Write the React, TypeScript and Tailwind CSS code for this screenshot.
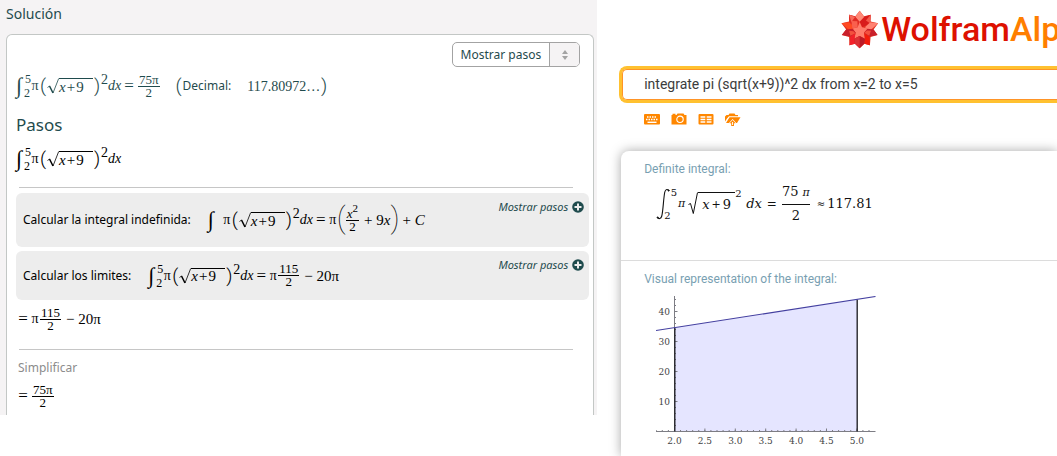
import type { ReactNode } from "react";

type Kids = { children?: ReactNode };

/* ---------- Left panel: formula pieces ---------- */

function Formula({ children }: Kids) {
  return (
    <span className="inline-flex h-8 items-center whitespace-nowrap font-['Liberation_Serif',serif] text-[15px] leading-4">
      {children}
    </span>
  );
}

function Integral({ lower, upper }: { lower?: string; upper?: string }) {
  return (
    <span className="inline-flex h-7 items-center">
      <span className="w-2 text-center text-[22px] leading-6">∫</span>
      <span className="flex h-6 w-2 flex-col justify-between pl-px text-[12px] leading-[10px]">
        <span className="text-right">{upper}</span>
        <span className="text-left">{lower}</span>
      </span>
    </span>
  );
}

function Pi() {
  return <span className="w-2 text-center text-[14px]">π</span>;
}

function Equals() {
  return <span className="w-4 text-center text-[17px]">=</span>;
}

function Paren({ children }: Kids) {
  return <span className="w-2 text-center font-[Roboto,sans-serif] text-[19px] font-light leading-5">{children}</span>;
}

function TallParen({ children }: Kids) {
  return <span className="w-2 pb-1 text-center font-[Roboto,sans-serif] text-[30px] font-thin leading-8">{children}</span>;
}

function Fraction({ top, bottom }: { top: ReactNode; bottom: ReactNode }) {
  return (
    <span className="mx-px inline-flex flex-col text-center text-[13px] leading-3">
      <span className="border-b border-current px-px">{top}</span>
      <span>{bottom}</span>
    </span>
  );
}

function RootSign() {
  return (
    <svg viewBox="0 0 12 16" className="h-4 w-3" fill="none" stroke="currentColor">
      <path d="M0.5 9.5 L2.5 8" strokeWidth="0.8" />
      <path d="M2.5 8 L6 15" strokeWidth="1.5" />
      <path d="M6 15 L11.7 0.5" strokeWidth="0.8" />
    </svg>
  );
}

function SquaredRoot() {
  return (
    <span className="inline-flex h-6 items-center">
      <Paren>(</Paren>
      <RootSign />
      <span className="flex h-4 w-[34px] items-center gap-px border-t border-current">
        <i>x</i>
        <span>+</span>
        <span>9</span>
      </span>
      <Paren>)</Paren>
      <span className="h-7 w-[7px] text-center text-[14px] leading-4">2</span>
      <i className="w-[13px] text-[14px]">dx</i>
    </span>
  );
}

function DefiniteIntegral() {
  return (
    <>
      <Integral lower="2" upper="5" />
      <Pi />
      <SquaredRoot />
    </>
  );
}

function Step({ title, children }: Kids & { title: string }) {
  return (
    <div className="flex items-stretch justify-between rounded-md bg-[#ededed] pl-[7px] pr-[5px]">
      <div className="flex items-center gap-4">
        <span className="whitespace-nowrap text-[12px] text-black">{title}</span>
        {children}
      </div>
      <a
        href="#pasos"
        className="flex items-center gap-1 self-start pt-[6px] text-[11px] italic leading-4 text-[#1f4b4d]"
      >
        Mostrar pasos
        <svg viewBox="0 0 12 12" className="size-3">
          <circle cx="6" cy="6" r="5.8" fill="#1f4b4d" />
          <path d="M6 2.5v7M2.5 6h7" stroke="#ededed" strokeWidth="2" />
        </svg>
      </a>
    </div>
  );
}

function SolutionPanel() {
  return (
    <section className="flex h-[415px] w-[56.5%] shrink-0 flex-col overflow-hidden bg-[#f5f3f4] pl-[6px] pr-[3px] font-['Noto_Sans',sans-serif] text-[#1f4b4d]">
      <h1 className="h-[34px] pt-1 text-[14px] leading-5">Solución</h1>
      <div className="flex-1 rounded-t-md border border-b-0 border-[#c3c7c5] bg-white px-2">
        <div className="flex justify-end pr-[5px] pt-[7px]">
          <button
            type="button"
            className="flex h-[25px] items-stretch overflow-hidden rounded-[5px] border border-[#a3a3a3] bg-white text-[12px]"
          >
            <span className="flex items-center border-r border-[#a3a3a3] px-2">Mostrar pasos</span>
            <span className="flex w-[29px] items-center justify-center bg-[#f5f3f4] text-[#a3a3a3]">
              <svg viewBox="0 0 6 10" className="h-[10px] w-[6px]" fill="currentColor">
                <path d="M3 0L6 4H0zM3 10L0 6h6z" />
              </svg>
            </span>
          </button>
        </div>

        <div className="flex h-8 items-center gap-[14px] pt-[6px]">
          <Formula>
            <DefiniteIntegral />
            <Equals />
            <Fraction top="75π" bottom="2" />
          </Formula>
          <span className="flex items-center text-[12px]">
            <Paren>(</Paren>
            Decimal:
            <span className="pl-4 font-['Liberation_Serif',serif] text-[14px]">117.80972…</span>
            <Paren>)</Paren>
          </span>
        </div>

        <h2 className="mt-[14px] pl-px text-[17px] leading-6">Pasos</h2>

        <div className="text-black">
          <div className="flex h-11 items-center">
            <Formula>
              <DefiniteIntegral />
            </Formula>
          </div>

          <hr className="ml-1 mr-3 mt-[6px] border-[#c6c6c6]" />

          <div className="-mr-1 ml-px mt-[5px] flex flex-col gap-1">
            <Step title="Calcular la integral indefinida:">
              <span className="flex h-[54px] items-center">
                <Formula>
                  <Integral />
                  <Pi />
                  <SquaredRoot />
                  <Equals />
                  <Pi />
                  <TallParen>(</TallParen>
                  <Fraction
                    top={
                      <>
                        <i>x</i>
                        <sup className="text-[11px]">2</sup>
                      </>
                    }
                    bottom="2"
                  />
                  <span className="pl-1">
                    + 9<i>x</i>
                  </span>
                  <TallParen>)</TallParen>
                  <span className="pl-1">
                    + <i>C</i>
                  </span>
                </Formula>
              </span>
            </Step>
            <Step title="Calcular los limites:">
              <span className="flex h-[49px] items-center">
                <Formula>
                  <DefiniteIntegral />
                  <Equals />
                  <Pi />
                  <Fraction top="115" bottom="2" />
                  <span className="pl-1">− 20π</span>
                </Formula>
              </span>
            </Step>
          </div>

          <div className="flex h-[38px] items-center">
            <Formula>
              <Equals />
              <Pi />
              <Fraction top="115" bottom="2" />
              <span className="pl-1">− 20π</span>
            </Formula>
          </div>

          <hr className="ml-1 mr-3 mt-[11px] border-[#c6c6c6]" />

          <h3 className="mt-2 pl-[3px] text-[12px] leading-5 text-[#8c8c8c]">Simplificar</h3>
          <div className="flex h-9 items-center">
            <Formula>
              <Equals />
              <Fraction top="75π" bottom="2" />
            </Formula>
          </div>
        </div>
      </div>
    </section>
  );
}

/* ---------- Right panel ---------- */

function Spikey() {
  return (
    <svg viewBox="62 28 114 118" className="h-[39px] w-[38px] shrink-0">
      <path
        d="M118 30L131 47L151 42L151 63L174 68L160 87L172 104L151 110L149 135L132 130L118 144L104 130L87 135L86 110L64 104L77 87L63 68L86 63L86 42L105 47Z"
        fill="#e2301f"
      />
      <path d="M118 30L132 49L118 64L104 49Z" fill="#ff8a78" />
      <path d="M86 42L104 48L118 64L110 80L87 68Z" fill="#e02b24" />
      <path d="M86 42L104 49L93 64Z" fill="#f76a5a" />
      <path d="M151 42L132 49L118 64L126 80L149 68Z" fill="#d91c1c" />
      <path d="M151 42L149 68L137 60Z" fill="#f45b4c" />
      <path d="M63 68L86 65L103 80L88 91Z" fill="#ff4a22" />
      <path d="M174 68L150 65L134 80L149 91Z" fill="#ff8272" />
      <path d="M96 84L112 80L118 64L125 80L143 84L131 97L134 115L118 107L102 115L106 97Z" fill="#ff7c6b" />
      <path d="M93 61L111 62L112 80L96 84Z" fill="#f9604e" />
      <path d="M77 87L97 85L106 97L91 108L64 104Z" fill="#c9202b" />
      <path d="M160 87L142 85L131 97L147 108L172 104Z" fill="#c9202b" />
      <path d="M86 91L99 92L105 98L90 106Z" fill="#f4503e" />
      <path d="M152 91L140 90L132 97L147 106Z" fill="#f4503e" />
      <path d="M91 108L105 99L102 115L104 130L87 135Z" fill="#f3212b" />
      <path d="M147 108L132 99L134 115L132 130L149 135Z" fill="#f21c0c" />
      <path d="M118 107L134 115L132 130L118 144L104 130L102 115Z" fill="#bd1a26" />
      <path d="M118 107L118 144L104 130L102 115Z" fill="#dc3035" />
    </svg>
  );
}

function InputTools() {
  return (
    <div className="flex items-center gap-[9px] text-[#ff8700]">
      <button type="button" aria-label="Keyboard">
        <svg viewBox="0 0 18 14" className="h-[14px] w-[18px]">
          <rect x="1" y="2" width="16" height="10.5" rx="1" fill="currentColor" />
          <path d="M4 5h10M3 7.5h12" stroke="white" strokeWidth="1.4" strokeDasharray="1.5 1" />
          <path d="M4.5 10.3h9" stroke="white" strokeWidth="1.4" />
        </svg>
      </button>
      <button type="button" aria-label="Camera">
        <svg viewBox="0 0 18 14" className="h-[14px] w-[18px]">
          <path d="M1.5 3h1V1.8h3V3h1l1-1.5h6L14.500 3H16.500v9.500h-15z" fill="currentColor" />
          <circle cx="10" cy="7.300" r="3.200" fill="none" stroke="white" strokeWidth="1.100" />
        </svg>
      </button>
      <button type="button" aria-label="Table">
        <svg viewBox="0 0 18 14" className="h-[14px] w-[18px]">
          <rect x="1.500" y="2" width="15" height="10.500" rx="1" fill="currentColor" />
          <path
            d="M3.500 5h4.800M9.700 5h4.800M3.500 7.500h4.800M9.700 7.500h4.800M3.500 10h4.800M9.700 10h4.800"
            stroke="white"
            strokeWidth="1.300"
          />
        </svg>
      </button>
      <button type="button" aria-label="Upload">
        <svg viewBox="0 0 18 14" className="h-[14px] w-[18px]">
          <path d="M1 9.500V4.500l1.500-1.500h2l1-1.500h5L11.500 3H14v1.300H5L3 6.500z" fill="currentColor" />
          <path d="M5.500 5.200h11L13 11h-.8L8.600 7 5 11H2z" fill="currentColor" />
          <path d="M8.600 8L11.600 11.300H10V14H7.200V11.300H5.600z" fill="currentColor" />
          <path d="M8.600 10v3" stroke="white" strokeWidth="1" />
        </svg>
      </button>
    </div>
  );
}

function AlphaFormula() {
  return (
    <div className="flex h-[42px] items-center whitespace-nowrap pl-3 font-['DejaVu_Serif',serif] text-[13px] leading-4 text-[#111]">
      <svg viewBox="0 0 14 32" className="h-8 w-[14px]" fill="none" stroke="currentColor">
        <path d="M13 3C12 .8 9.500 1 8.800 4C7.500 10 7.200 22 5.800 28C5 31 2.500 31.200 1.500 29.500" strokeWidth="1.100" />
        <circle cx="12.600" cy="2.500" r=".6" fill="currentColor" />
        <circle cx="1.700" cy="29.500" r=".6" fill="currentColor" />
      </svg>
      <span className="-ml-[6px] flex h-8 w-[13px] flex-col justify-between text-[10px] leading-[9px]">
        <span className="text-right">5</span>
        <span className="text-left">2</span>
      </span>
      <i className="w-[9px] text-center text-[11px]">π</i>
      <svg viewBox="0 0 10 24" className="ml-[2px] h-6 w-[10px]" fill="none" stroke="currentColor">
        <path d="M.5 12.500L2.500 11.500L5.300 21.500L9.500 .5" />
      </svg>
      <span className="flex h-6 w-[37px] items-center gap-[2px] border-t border-current pl-1">
        <i>x</i>
        <span className="text-[11px]">+</span>
        <span>9</span>
      </span>
      <span className="h-8 w-[11px] text-[10px] leading-3">2</span>
      <i>dx</i>
      <span className="px-[5px] text-[12px]">=</span>
      <span className="flex flex-col text-center">
        <span className="border-b border-current pb-[3px]">
          75 <i className="text-[11px]">π</i>
        </span>
        <span className="pt-[3px]">2</span>
      </span>
      <span className="pl-[7px] pr-[2px] text-[10px]">≈</span>
      <span>117.81</span>
    </div>
  );
}

const X_LABELS = ["2.0", "2.5", "3.0", "3.5", "4.0", "4.5", "5.0"];
const Y_LABELS = [10, 20, 30, 40];
const X_MINOR = Array.from({ length: 36 }, (_, i) => 0.2 + i * 6.08);
const Y_MINOR = Array.from({ length: 22 }, (_, i) => 135.5 - (i + 1) * 6);

function IntegralPlot() {
  return (
    <svg
      viewBox="0 0 220 156"
      className="h-[156px] w-[220px]"
      role="img"
      aria-label="Area under the curve from 2 to 5"
    >
      <path d="M18.500 31.800L201 3.500V135.500H18.500Z" fill="#e5e5ff" />
      <g stroke="#7d7d84" strokeWidth="1">
        <path d="M0 135.500H219.500M18.500 0V135.500" />
        {X_MINOR.map((x) => (
          <path key={x} d={`M${x} 135.500v-1.500`} />
        ))}
        {Y_MINOR.map((y) => (
          <path key={y} d={`M18.500 ${y}h1.500`} />
        ))}
        {Y_LABELS.map((v) => (
          <path key={v} d={`M18.500 ${135.5 - v * 3}h3`} />
        ))}
        {X_LABELS.map((v, i) => (
          <path key={v} d={`M${18.5 + i * 30.4} 135.500v-3`} />
        ))}
      </g>
      <path d="M18.800 31.800V135.500M201.200 3.500V135.500" stroke="#26262c" strokeWidth="1.400" />
      <path d="M0 34.500L219.500 .5" stroke="#433fa0" strokeWidth="1.100" />
      <g className="font-['DejaVu_Serif',serif] text-[9px]" fill="#444">
        {Y_LABELS.map((v) => (
          <text key={v} x="14" y={139 - v * 3} textAnchor="end">
            {v}
          </text>
        ))}
        {X_LABELS.map((v, i) => (
          <text key={v} x={18.5 + i * 30.4} y="148" textAnchor="middle">
            {v}
          </text>
        ))}
      </g>
    </svg>
  );
}

function AlphaPanel() {
  return (
    <section className="flex h-[456px] min-w-0 flex-1 flex-col overflow-hidden bg-white pl-[22px] font-[Roboto,sans-serif]">
      <a href="#inicio" className="flex h-[66px] items-center gap-[2px] whitespace-nowrap pb-2 pl-[222px]">
        <Spikey />
        <span className="text-[34px] font-medium leading-10 text-[#dd1100]">
          Wolfram<span className="text-[#ff7e00]">Alp</span>
        </span>
      </a>
      <div className="rounded-l-lg border-[3px] border-r-0 border-[#ffc130]">
        <input
          aria-label="Query"
          defaultValue="integrate pi (sqrt(x+9))^2 dx from x=2 to x=5"
          className="block h-[31px] w-full rounded-l-[5px] border border-r-0 border-[#ff9426] bg-white pb-px pl-[21px] text-[14px] text-[#3c3c3c] outline-none"
        />
      </div>
      <div className="pl-6 pt-[9px]">
        <InputTools />
      </div>
      <div className="ml-[2px] mt-[25px] flex-1 rounded-tl-lg bg-white shadow-[0_0_12px_rgba(0,0,0,0.35)]">
        <div className="h-[110px] border-b border-[#dcdcdc] pl-[23px] pt-[10px]">
          <h2 className="text-[12px] leading-4 text-[#799fb2]">Definite integral:</h2>
          <div className="pt-[6px]">
            <AlphaFormula />
          </div>
        </div>
        <div className="pl-[23px] pt-[10px]">
          <h2 className="text-[12px] leading-4 text-[#799fb2]">Visual representation of the integral:</h2>
          <div className="pl-3 pt-[9px]">
            <IntegralPlot />
          </div>
        </div>
      </div>
    </section>
  );
}

export default function App() {
  return (
    <main className="flex items-start overflow-hidden bg-white">
      <SolutionPanel />
      <AlphaPanel />
    </main>
  );
}
